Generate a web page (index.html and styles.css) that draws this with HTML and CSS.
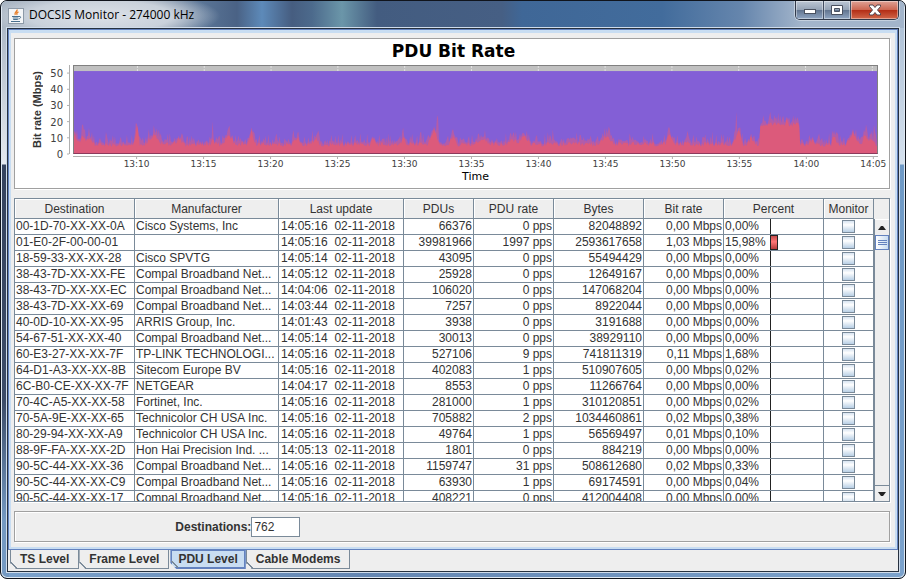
FILE: index.html
```html
<!DOCTYPE html>
<html lang="en">
<head>
    <meta charset="UTF-8">
    <meta name="viewport" content="width=device-width, initial-scale=1.0">
    <title>DOCSIS Monitor - 274000 kHz</title>
    <link rel="stylesheet" href="styles.css">
</head>
<body>
    <div class="window">
        <header class="titlebar">
            <svg class="app-icon" width="16" height="16" viewBox="0 0 16 16" aria-hidden="true">
                <rect x="0.5" y="0.5" width="15" height="15" fill="#f4f6f8" stroke="#8d9aa8"/>
                <path d="M9 1.500c1 2-3.500 2.800-1.800 5.500M10.500 3.800c-2 1-2.200 1.700-1.200 3" fill="none" stroke="#e8802c" stroke-width="1.400"/>
                <path d="M4 8.500h7M4.800 10h5.500M5.200 11.500h4.600M3 13.500h9M11 8.500c2.500-.5 2 2-.5 2.500" fill="none" stroke="#49708f"/>
            </svg>
            <span class="window-title">DOCSIS Monitor - 274000 kHz</span>
            <div class="caption-buttons">
                <button class="caption minimize" type="button" aria-label="Minimize">
                    <svg width="14" height="12" viewBox="0 0 14 12"><rect x="1.500" y="5.500" width="11" height="4" fill="#fff" stroke="#4a5160"/></svg>
                </button>
                <button class="caption maximize" type="button" aria-label="Maximize">
                    <svg width="14" height="12" viewBox="0 0 14 12"><path d="M1.500 1.500h11v9h-11zM4.500 4.500v3h5v-3z" fill="#fff" fill-rule="evenodd" stroke="#4a5160"/></svg>
                </button>
                <button class="caption close" type="button" aria-label="Close">
                    <svg width="14" height="12" viewBox="0 0 14 12"><path d="M1.500 1h3.500l2 2.500L9 1h3.500v1.500L9.500 6l3 3.500V11H9L7 8.500 5 11H1.500V9.500l3-3.500-3-3.500z" fill="#fff" stroke="#54454f"/></svg>
                </button>
            </div>
        </header>

        <main class="client">
            <section class="tab-content">
                <div class="chart-panel">
                    <h1 class="chart-title">PDU Bit Rate</h1>
                    <div class="chart">
                        <div class="y-title"><span>Bit rate (Mbps)</span></div>
                        <svg class="y-axis" id="yAxis"></svg>
                        <svg class="plot" id="plot" viewBox="0 0 805 550" preserveAspectRatio="none">
                            <rect class="plot-back" width="805" height="550"/>
                            <g id="gridLines"></g>
                            <rect class="plot-total" y="32" width="805" height="518"/>
                            <path class="plot-peaks" id="peaks"/>
                            <path class="plot-rate" id="rate"/>
                        </svg>
                        <svg class="x-axis" id="xAxis"></svg>
                        <div class="x-title">Time</div>
                    </div>
                </div>

                <div class="table-pane">
                    <div class="table-view">
                        <table>
                            <colgroup>
                                <col class="col-dest"><col class="col-man"><col class="col-update">
                                <col class="col-pdus"><col class="col-rate"><col class="col-bytes">
                                <col class="col-bit"><col class="col-percent"><col class="col-monitor">
                            </colgroup>
                            <thead>
                                <tr>
                                    <th>Destination</th>
                                    <th>Manufacturer</th>
                                    <th>Last update</th>
                                    <th>PDUs</th>
                                    <th>PDU rate</th>
                                    <th>Bytes</th>
                                    <th>Bit rate</th>
                                    <th>Percent</th>
                                    <th>Monitor</th>
                                </tr>
                            </thead>
                            <tbody id="rows"></tbody>
                        </table>
                    </div>
                    <div class="table-side">
                        <div class="corner"></div>
                        <div class="scrollbar">
                            <button class="arrow" type="button" aria-label="Scroll up">
                                <svg width="8" height="4" viewBox="0 0 8 4"><path d="M0 4h8L5 0H3z" fill="#222"/></svg>
                            </button>
                            <div class="track">
                                <div class="thumb"><i></i><i></i><i></i></div>
                            </div>
                            <button class="arrow arrow-down" type="button" aria-label="Scroll down">
                                <svg width="8" height="4" viewBox="0 0 8 4"><path d="M0 0h8L5 4H3z" fill="#222"/></svg>
                            </button>
                        </div>
                    </div>
                </div>

                <div class="summary">
                    <div class="summary-field">
                        <label for="destinations">Destinations:</label>
                        <input type="text" id="destinations" value="762">
                    </div>
                </div>
            </section>

            <nav class="tabs">
                <button class="tab" type="button">TS Level</button>
                <button class="tab" type="button">Frame Level</button>
                <button class="tab active" type="button">PDU Level</button>
                <button class="tab" type="button">Cable Modems</button>
            </nav>
        </main>
    </div>

    <script>
        // destination, manufacturer, last update, PDUs, PDU rate, bytes, bit rate, percent
        const destinations = [
            ['00-1D-70-XX-XX-0A', 'Cisco Systems, Inc', '14:05:16', 66376, 0, 82048892, '0,00', '0,00'],
            ['01-E0-2F-00-00-01', '', '14:05:16', 39981966, 1997, 2593617658, '1,03', '15,98'],
            ['18-59-33-XX-XX-28', 'Cisco SPVTG', '14:05:14', 43095, 0, 55494429, '0,00', '0,00'],
            ['38-43-7D-XX-XX-FE', 'Compal Broadband Net...', '14:05:12', 25928, 0, 12649167, '0,00', '0,00'],
            ['38-43-7D-XX-XX-EC', 'Compal Broadband Net...', '14:04:06', 106020, 0, 147068204, '0,00', '0,00'],
            ['38-43-7D-XX-XX-69', 'Compal Broadband Net...', '14:03:44', 7257, 0, 8922044, '0,00', '0,00'],
            ['40-0D-10-XX-XX-95', 'ARRIS Group, Inc.', '14:01:43', 3938, 0, 3191688, '0,00', '0,00'],
            ['54-67-51-XX-XX-40', 'Compal Broadband Net...', '14:05:14', 30013, 0, 38929110, '0,00', '0,00'],
            ['60-E3-27-XX-XX-7F', 'TP-LINK TECHNOLOGI...', '14:05:16', 527106, 9, 741811319, '0,11', '1,68'],
            ['64-D1-A3-XX-XX-8B', 'Sitecom Europe BV', '14:05:16', 402083, 1, 510907605, '0,00', '0,02'],
            ['6C-B0-CE-XX-XX-7F', 'NETGEAR', '14:04:17', 8553, 0, 11266764, '0,00', '0,00'],
            ['70-4C-A5-XX-XX-58', 'Fortinet, Inc.', '14:05:16', 281000, 1, 310120851, '0,00', '0,02'],
            ['70-5A-9E-XX-XX-65', 'Technicolor CH USA Inc.', '14:05:16', 705882, 2, 1034460861, '0,02', '0,38'],
            ['80-29-94-XX-XX-A9', 'Technicolor CH USA Inc.', '14:05:16', 49764, 1, 56569497, '0,01', '0,10'],
            ['88-9F-FA-XX-XX-2D', 'Hon Hai Precision Ind. ...', '14:05:13', 1801, 0, 884219, '0,00', '0,00'],
            ['90-5C-44-XX-XX-36', 'Compal Broadband Net...', '14:05:16', 1159747, 31, 508612680, '0,02', '0,33'],
            ['90-5C-44-XX-XX-C9', 'Compal Broadband Net...', '14:05:16', 63930, 1, 69174591, '0,00', '0,04'],
            ['90-5C-44-XX-XX-17', 'Compal Broadband Net...', '14:05:16', 408221, 0, 412004408, '0,00', '0,00']
        ];

        document.getElementById('rows').innerHTML = destinations.map(d => {
            const percent = parseFloat(d[7].replace(',', '.'));
            return `<tr>
                <td>${d[0]}</td>
                <td>${d[1]}</td>
                <td class="update">${d[2]}&nbsp; 02-11-2018</td>
                <td class="number">${d[3]}</td>
                <td class="number">${d[4]} pps</td>
                <td class="number">${d[5]}</td>
                <td class="number">${d[6]} Mbps</td>
                <td><div class="percent"><span>${d[7]}%</span><div class="meter"><div class="bar" style="width: ${percent}%"></div></div></div></td>
                <td class="monitor"><input type="checkbox" aria-label="Monitor ${d[0]}"></td>
            </tr>`;
        }).join('');

        // Small seeded generator so the traffic looks the same on every load
        let seed = 20181102;
        function random() {
            seed = (seed * 1103515245 + 12345) % 2147483648;
            return seed / 2147483648;
        }

        // position, height above the base rate, half width
        const bursts = [
            [1, 6, 5], [9, 6, 2], [15, 5, 5], [63, 12, 2], [80, 6, 8], [105, 3, 6], [139, 3, 1], [155, 6, 6],
            [178, 8, 3], [224, 4, 4], [242, 4, 4], [300, 3, 3], [330, 5, 2], [361, 10, 5],
            [380, 5, 4], [410, 3, 8], [440, 3, 5], [451, 5, 7], [534, 6, 7], [597, 6, 3], [615, 3, 3],
            [666, 9, 4], [679, 4, 4], [740, 3, 4], [762, 5, 2], [781, 7, 6], [793, 6, 3], [799, 4, 4]
        ];
        // one-sample peaks: position -> rate
        const flashes = { 9: 18, 139: 20, 330: 16, 364: 24, 365: 22, 480: 15, 664: 26, 762: 14, 794: 18, 802: 18 };
        let peaks = 'M0 550';
        let rate = 'M0 550';
        for (let x = 0; x <= 805; x++) {
            let base = 4;
            bursts.forEach(b => {
                base += Math.max(0, b[1] * (1 - Math.abs(x - b[0]) / (b[2] + 1)));
            });
            if (x > 687 && x < 728) base = 16.5;
            if (x === 714 || x === 715) base = 20;
            const low = base + random() * 3;
            const high = Math.max(low + 1 + Math.pow(random(), 3) * 6, flashes[x] || 0);
            peaks += `L${x} ${Math.round(550 - high * 10)}`;
            rate += `L${x} ${Math.round(550 - low * 10)}`;
        }
        document.getElementById('peaks').setAttribute('d', peaks + 'L805 550Z');
        document.getElementById('rate').setAttribute('d', rate + 'L805 550Z');

        const times = ['13:10', '13:15', '13:20', '13:25', '13:30', '13:35', '13:40', '13:45', '13:50', '13:55', '14:00', '14:05'];
        let xAxis = '<line x1="0" x2="100%" y1="2.5" y2="2.5"/>';
        let grid = '';
        times.forEach((time, i) => {
            const x = 7.9 + i * 8.32;
            xAxis += `<line x1="${x}%" x2="${x}%" y1="2" y2="5"/><text x="${x}%" y="13">${time}</text>`;
            grid += `<line x1="${x * 8.05}" x2="${x * 8.05}" y1="0" y2="550"/>`;
        });
        document.getElementById('xAxis').innerHTML = xAxis;
        document.getElementById('gridLines').innerHTML = grid;

        let yAxis = '<line x1="24.5" x2="24.5" y1="0" y2="100%"/>';
        for (let v = 0; v <= 50; v += 10) {
            const y = 100 - v / 0.55;
            yAxis += `<line x1="22" x2="24" y1="${y}%" y2="${y}%"/><text x="18" y="${y}%" dy="4">${v}</text>`;
        }
        document.getElementById('yAxis').innerHTML = yAxis;
    </script>
</body>
</html>
```

FILE: styles.css
```css
* {
    box-sizing: border-box;
}

body {
    margin: 0;
    height: 100vh;
    background-color: #fff;
    font-family: "Liberation Sans", Arial, sans-serif;
    font-size: 12px;
    color: #333;
}

button, input {
    font: inherit;
    color: inherit;
    margin: 0;
    padding: 0;
}

.window {
    display: flex;
    flex-direction: column;
    height: 100vh;
    padding: 0 6px 6px;
    border: 1px solid #10141c;
    border-radius: 7px;
    box-shadow: inset 0 0 0 1px #dfe8f2;
    background:
        linear-gradient(#a3b0bf, #e4e8ee 163px, #35435e 164px, #3c4c68 400px, #7499c2 520px) left / 8px 100% no-repeat,
        linear-gradient(#a9bdd3, #d5e1ee 163px, #6f9ac6 164px, #7ba2cc) right / 8px 100% no-repeat,
        linear-gradient(90deg, #7ba2cc, #6486b2 40%, #7ba2cc) bottom / 100% 8px no-repeat,
        #53759f;
    overflow: hidden;
}

/* Title bar */
.titlebar {
    display: flex;
    flex: none;
    gap: 5px;
    height: 27px;
    margin: 0 -5px;
    padding-left: 6px;
    background:
        radial-gradient(120px 26px at 98px 15px, #dce1e8 0, #c9d1db 60%, rgba(163, 176, 191, 0) 100%),
        linear-gradient(90deg, #a3b0bf 0, #8795a8 150px, #5a7596 200px, #4a6285 235px, #5d8ab9 260px, #465d80 290px, #4c6a8c 310px, #6b96a9 340px, #435c80 375px, #465f84 500px, #3f6797 520px, #426c9c 660px, #6686ad 740px, #a3b5cb 800px);
}

.app-icon {
    margin-top: 7px;
}

.window-title {
    flex: 1;
    font-family: "Open Sans", "Noto Sans", sans-serif;
    line-height: 28px;
    color: #000;
}

.caption-buttons {
    display: flex;
    height: 19px;
    margin-right: 5px;
    border: 1px solid #313a4b;
    border-top: 0;
    border-radius: 0 0 5px 5px;
    box-shadow: 0 0 0 1px #c4d0de;
    overflow: hidden;
}

.caption {
    display: flex;
    align-items: center;
    justify-content: center;
    width: 28px;
    border: 0;
    border-right: 1px solid #424e62;
    background: linear-gradient(#bcc7d5, #93a2b5 50%, #61748f 51%, #90a6c3);
    box-shadow: inset 0 0 0 1px rgba(255, 255, 255, 0.4);
}

.maximize {
    width: 27px;
}

.close {
    width: 47px;
    border-right: 0;
    background: linear-gradient(#dfa296, #cc6550 50%, #b32d15 51%, #d1674a);
}

/* Client area */
.client {
    display: flex;
    flex-direction: column;
    flex: 1;
    min-height: 0;
    border: 1px solid #26313f;
    outline: 1px solid #d0dceb;
    background-color: #eee;
}

.tab-content {
    display: flex;
    flex-direction: column;
    flex: 1;
    gap: 9px;
    min-height: 0;
    padding: 8px 7px 7px 5px;
    border: 1px solid #6382bf;
    box-shadow: inset 0 0 0 2px #c8ddf2, inset 0 3px 0 #c8ddf2;
}

.chart-panel {
    padding: 4px 11px 4px 14px;
    border: 1px solid #a0a0a0;
    box-shadow: 1px 1px 0 #fff;
    background-color: #fff;
}

.chart-title {
    margin: 0;
    font-family: "DejaVu Sans", Verdana, sans-serif;
    font-size: 17px;
    line-height: 16px;
    text-align: center;
    color: #000;
}

.chart {
    display: grid;
    grid-template-columns: 16px 28px 1fr;
    grid-template-rows: 89px 16px 14px;
    padding-top: 6px;
    font-family: "DejaVu Sans", Verdana, sans-serif;
}

.y-title {
    display: flex;
    align-items: center;
    justify-content: center;
    font-family: "Liberation Sans", Arial, sans-serif;
    font-size: 11px;
    font-weight: bold;
    line-height: 16px;
}

.y-title span {
    writing-mode: vertical-rl;
    transform: rotate(180deg);
    white-space: nowrap;
}

.y-axis, .x-axis {
    width: 100%;
    height: 100%;
    overflow: visible;
    fill: #404040;
}

.y-axis {
    font-size: 10px;
    text-anchor: end;
}

.x-axis {
    grid-column: 3;
    font-size: 9px;
    text-anchor: middle;
}

.y-axis line, .x-axis line {
    stroke: #b0b0b0;
}

.plot {
    width: 100%;
    height: 100%;
    border: 1px solid #808080;
    border-bottom-color: #8c3a5c;
}

.plot-back {
    fill: #c0c0c0;
}

.plot line {
    stroke: #fff;
    stroke-dasharray: 12 8;
}

.plot-total {
    fill: #835fd6;
}

.plot-peaks {
    fill: #b35ca8;
}

.plot-rate {
    fill: #dc5a7b;
}

.x-title {
    grid-column: 3;
    font-size: 11px;
    line-height: 14px;
    text-align: center;
    color: #000;
}

/* Destination table */
.table-pane {
    display: flex;
    flex: 1;
    min-height: 0;
    border: 1px solid #7a8a99;
    box-shadow: 1px 1px 0 #fff;
}

.table-view {
    flex: 1;
    min-width: 0;
    overflow: hidden;
    background-color: #fff;
}

table {
    width: 100%;
    table-layout: fixed;
    border-collapse: separate;
    border-spacing: 0;
}

.col-dest { width: 120px; }
.col-man { width: 144px; }
.col-update { width: 125px; }
.col-pdus { width: 70px; }
.col-rate { width: 80px; }
.col-bytes { width: 90px; }
.col-bit { width: 80px; }
.col-percent { width: 100px; }
.col-monitor { width: 50px; }

th, td {
    padding: 0 1px;
    border: solid #7a8a99;
    border-width: 0 1px 1px 0;
    line-height: 15px;
    white-space: nowrap;
    overflow: hidden;
}

th {
    height: 20px;
    padding-top: 2px;
    background-color: #eee;
    box-shadow: inset 1px 1px 0 #fff;
    font-weight: normal;
    text-align: center;
}

td {
    height: 16px;
}

.update {
    padding-left: 2px;
}

.number {
    text-align: right;
}

.percent {
    display: flex;
    height: 15px;
}

.percent span {
    width: 45px;
}

.meter {
    flex: 1;
}

.bar {
    min-width: 1px;
    height: 15px;
    background: linear-gradient(#b44, #f77 45%, #a33);
    box-shadow: inset 0 0 0 1px #222;
}

.monitor {
    line-height: 0;
    text-align: center;
}

.monitor input {
    appearance: none;
    width: 13px;
    height: 13px;
    border: 1px solid #7a8a99;
    background: linear-gradient(#d8e4f1, #fff 35%, #b8cfe5);
    vertical-align: middle;
}

.table-side {
    display: flex;
    flex-direction: column;
    width: 15px;
}

.corner {
    height: 20px;
}

.scrollbar {
    display: flex;
    flex-direction: column;
    flex: 1;
    border-left: 1px solid #7a8a99;
}

.arrow {
    display: flex;
    align-items: center;
    justify-content: center;
    height: 16px;
    border: 0;
    border-top: 1px solid #fff;
    background-color: #eee;
}

.arrow-down {
    border-top-color: #7a8a99;
}

.track {
    flex: 1;
}

.thumb {
    display: flex;
    flex-direction: column;
    align-items: center;
    gap: 1px;
    height: 15px;
    padding-top: 4px;
    border: 1px solid #6382bf;
    background: linear-gradient(90deg, #fff, #c8ddf2);
}

.thumb i {
    width: 9px;
    height: 1px;
    background-color: #6382bf;
}

/* Summary */
.summary {
    padding: 5px 0 4px;
    border: 1px solid #a0a0a0;
    box-shadow: 1px 1px 0 #fff, inset 1px 1px 0 #fff;
}

.summary-field {
    display: flex;
    align-items: center;
    justify-content: center;
    width: 51%;
}

.summary-field label {
    font-weight: bold;
}

.summary-field input {
    width: 49px;
    height: 20px;
    padding-left: 2px;
    border: 1px solid #7a8a99;
    background-color: #fff;
}

/* Tabs */
.tabs {
    display: flex;
    padding: 0 0 2px 2px;
}

.tab {
    position: relative;
    height: 19px;
    padding: 0 9px;
    border: solid #7a8a99;
    border-width: 0 1px 1px 1px;
    background-color: #eee;
    font-weight: bold;
    clip-path: polygon(0 0, 100% 0, 100% 100%, 6px 100%, 0 13px);
}

/* Cut lower left corner */
.tab::before {
    content: "";
    position: absolute;
    left: -1px;
    bottom: -1px;
    width: 7px;
    height: 7px;
    background: linear-gradient(45deg, transparent 46%, #7a8a99 47%, #7a8a99 60%, transparent 61%);
}

.tab.active {
    margin-left: 1px;
    padding: 0 6px;
    border: 2px solid #6382bf;
    border-top-width: 1px;
    background-color: #c8ddf2;
}
```
